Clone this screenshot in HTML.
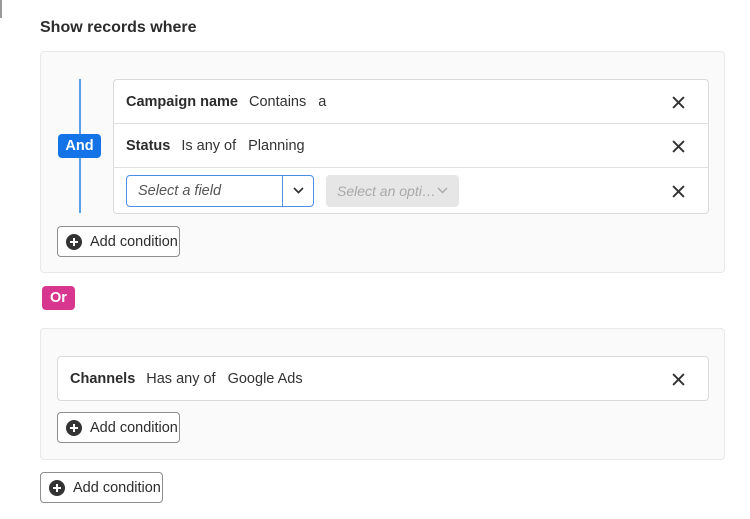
<!DOCTYPE html>
<html><head><style>
*{box-sizing:border-box;margin:0;padding:0}
body{width:750px;height:519px;background:#fff;font-family:"Liberation Sans",sans-serif;color:#2c2c2c;position:relative;overflow:hidden;font-size:14px}
.a{position:absolute}
.grp{background:#fafafa;border:1px solid #e9e9e9;border-radius:4px}
.card{background:#fff;border:1px solid #dadada;border-radius:4px}
.row{position:absolute;left:0;right:0;display:flex;align-items:center;padding-left:12px;font-size:14.5px;color:#333}
.row b{margin-right:11px;color:#2c2c2c}
.row span{margin-right:12px}
.x{position:absolute;right:23px;top:50%;margin-top:-6px;width:13px;height:13px}
.btn{position:absolute;height:31px;width:123px;border:1px solid #8e8e8e;border-radius:4px;background:#fff;display:flex;align-items:center;padding-left:8px;font-size:14.5px;color:#2c2c2c}
.btn svg{margin-right:8px;flex-shrink:0}
</style></head><body>
<div class="a" style="left:0;top:0;width:2px;height:18px;background:#999"></div>
<div class="a" style="left:40px;top:19px;font-size:16px;font-weight:bold;color:#2c2c2c">Show records where</div>

<div class="a grp" style="left:40px;top:51px;width:685px;height:222px"></div>
<div class="a" style="left:79px;top:79px;width:2px;height:134px;background:#5c9ee8"></div>
<div class="a" style="left:58px;top:134px;width:43px;height:24px;background:#1473e6;border-radius:4px;color:#fff;font-weight:bold;font-size:14.5px;text-align:center;line-height:24px">And</div>
<div class="a card" style="left:113px;top:79px;width:596px;height:135px">
 <div class="row" style="top:0;height:44px;border-bottom:1px solid #e1e1e1"><b>Campaign name</b><span>Contains</span><span>a</span>
  <svg class="x" viewBox="0 0 12 12"><path d="M1 1L11 11M11 1L1 11" stroke="#333" stroke-width="1.8"/></svg></div>
 <div class="row" style="top:44px;height:44px;border-bottom:1px solid #e1e1e1"><b>Status</b><span>Is any of</span><span>Planning</span>
  <svg class="x" viewBox="0 0 12 12"><path d="M1 1L11 11M11 1L1 11" stroke="#333" stroke-width="1.8"/></svg></div>
 <div class="row" style="top:88px;height:45px">
  <div style="flex-shrink:0;width:188px;height:32px;border:1px solid #4b8ee8;border-radius:4px;display:flex;font-style:italic;color:#555">
   <div style="flex:1;padding-left:11px;line-height:30px;border-right:1px solid #4b8ee8">Select a field</div>
   <div style="width:30px;display:flex;align-items:center;justify-content:center"><svg width="11" height="7" viewBox="0 0 11 7"><path d="M1 1L5.5 5.5L10 1" fill="none" stroke="#333" stroke-width="1.7"/></svg></div>
  </div>
  <div style="flex-shrink:0;margin-left:12px;width:133px;height:32px;background:#e6e6e6;border-radius:4px;display:flex;align-items:center;justify-content:space-between;padding:0 11px;font-style:italic;color:#a8a8a8;font-size:14px;white-space:nowrap">Select an opti…<svg width="11" height="7" viewBox="0 0 11 7"><path d="M1 1L5.5 5.5L10 1" fill="none" stroke="#aaa" stroke-width="1.5"/></svg></div>
  <svg class="x" viewBox="0 0 12 12"><path d="M1 1L11 11M11 1L1 11" stroke="#333" stroke-width="1.8"/></svg></div>
</div>
<div class="btn" style="left:57px;top:226px"><svg width="16" height="16" viewBox="0 0 16 16"><circle cx="8" cy="8" r="8" fill="#333"/><path d="M8 4V12M4 8H12" stroke="#fff" stroke-width="2"/></svg>Add condition</div>

<div class="a" style="left:42px;top:286px;width:33px;height:24px;background:#d83790;border-radius:4px;color:#fff;font-weight:bold;font-size:14.5px;text-align:center;line-height:24px">Or</div>

<div class="a grp" style="left:40px;top:328px;width:685px;height:132px"></div>
<div class="a card" style="left:57px;top:356px;width:652px;height:45px">
 <div class="row" style="top:0;height:43px"><b>Channels</b><span>Has any of</span><span>Google Ads</span>
  <svg class="x" viewBox="0 0 12 12"><path d="M1 1L11 11M11 1L1 11" stroke="#333" stroke-width="1.8"/></svg></div>
</div>
<div class="btn" style="left:57px;top:412px"><svg width="16" height="16" viewBox="0 0 16 16"><circle cx="8" cy="8" r="8" fill="#333"/><path d="M8 4V12M4 8H12" stroke="#fff" stroke-width="2"/></svg>Add condition</div>

<div class="btn" style="left:40px;top:472px"><svg width="16" height="16" viewBox="0 0 16 16"><circle cx="8" cy="8" r="8" fill="#333"/><path d="M8 4V12M4 8H12" stroke="#fff" stroke-width="2"/></svg>Add condition</div>
</body></html>
